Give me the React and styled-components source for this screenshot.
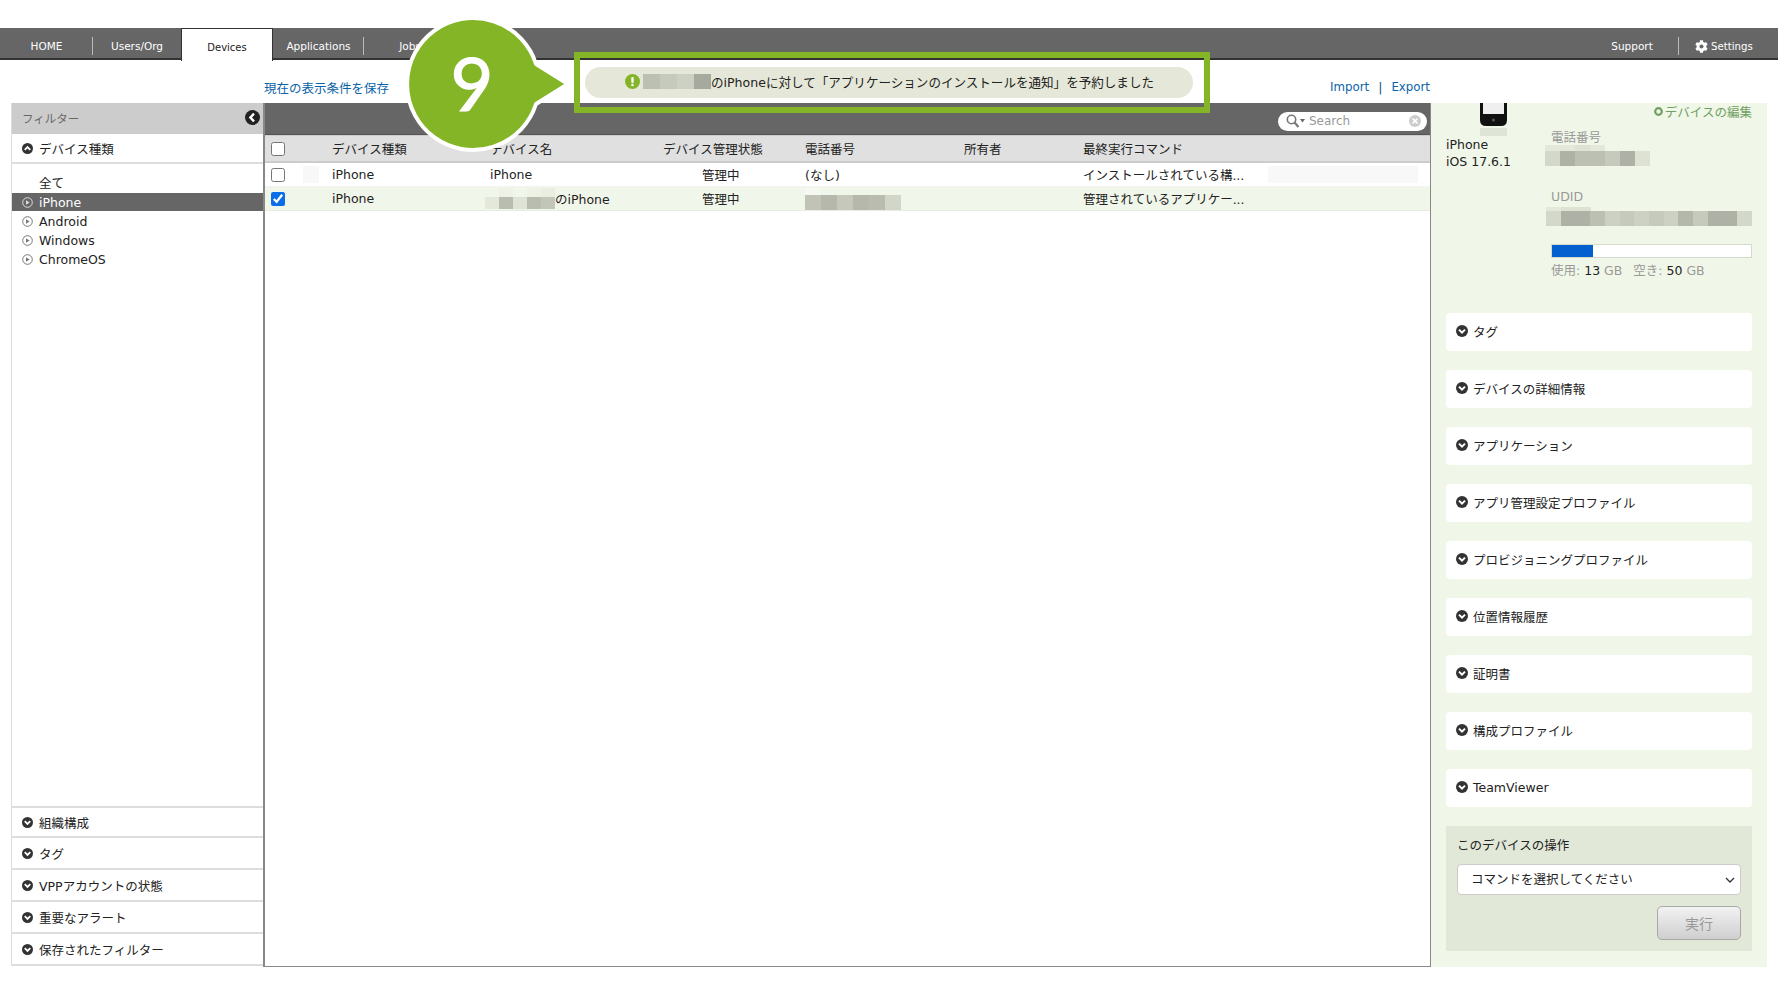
import React from 'react'
import styled, { createGlobalStyle } from 'styled-components'
import { FaCog } from 'react-icons/fa'

const GlobalStyle = createGlobalStyle`
  html, body { margin: 0; padding: 0; background: #fff; }
  body {
    font-family: "DejaVu Sans", "Noto Sans CJK JP", sans-serif;
    font-size: 12.5px;
    color: #222;
  }
`

const FILTER_LIST = ['iPhone', 'Android', 'Windows', 'ChromeOS']
const FILTER_SECTIONS = ['組織構成', 'タグ', 'VPPアカウントの状態', '重要なアラート', '保存されたフィルター']
const DETAIL_CARDS = [
  'タグ',
  'デバイスの詳細情報',
  'アプリケーション',
  'アプリ管理設定プロファイル',
  'プロビジョニングプロファイル',
  '位置情報履歴',
  '証明書',
  '構成プロファイル',
  'TeamViewer',
]

function Chevron({ up, size = 11 }) {
  return (
    <ChevronSvg viewBox="0 0 12 12" width={size} height={size}>
      <circle cx="6" cy="6" r="6" fill="#333" />
      <path d={up ? 'M3 7.4 L6 4.4 L9 7.4' : 'M3 4.6 L6 7.6 L9 4.6'} fill="none" stroke="#fff" strokeWidth="2" />
    </ChevronSvg>
  )
}

function RadioPlay({ light }) {
  const c = light ? '#ddd' : '#777'
  return (
    <ChevronSvg viewBox="0 0 11 11" width={11} height={11}>
      <circle cx="5.5" cy="5.5" r="4.8" fill="none" stroke={c} strokeWidth="1" />
      <path d="M4 3.2 L7.6 5.5 L4 7.8 Z" fill={c} />
    </ChevronSvg>
  )
}

function Mosaic({ rows, margin }) {
  return (
    <MosaicBox $margin={margin}>
      {rows.map((row, i) => (
        <MosaicRow key={i} $h={row.h}>
          {row.cells.map((c, j) => <MosaicCell key={j} $c={c} $w={row.w} />)}
        </MosaicRow>
      ))}
    </MosaicBox>
  )
}

function Callout() {
  return (
    <CalloutSvg width="184" height="156" viewBox="0 0 184 156">
      <path
        d="M136 54 L168 74 L136 94 A66 66 0 1 1 136 54 Z"
        fill="#84b527"
        stroke="#fff"
        strokeWidth="4"
        strokeLinejoin="round"
      />
      <text x="72" y="101" textAnchor="middle" fontFamily="Lato, sans-serif" fontSize="74" fill="#fff" stroke="#fff" strokeWidth="1.2">9</text>
    </CalloutSvg>
  )
}

function PhoneImage() {
  return (
    <svg width="30" height="34" viewBox="0 0 30 34">
      <path d="M1 -6 H28 V17 Q28 23 22 23 H7 Q1 23 1 17 Z" fill="#111" />
      <rect x="4" y="-4" width="21" height="15" fill="#efefef" />
      <circle cx="14.5" cy="17" r="1.6" fill="#555" />
      <rect x="1" y="25" width="27" height="9" fill="#dfe5d6" />
    </svg>
  )
}

export default function App() {
  return (
    <Page>
      <GlobalStyle />
      <Nav>
        <NavItem $w={93} $sep>HOME</NavItem>
        <NavItem $w={88}>Users/Org</NavItem>
        <ActiveTab>Devices</ActiveTab>
        <NavItem $w={91} $sep>Applications</NavItem>
        <NavItem $w={92}>Jobs</NavItem>
        <NavRight>
          <NavItem $w={94} $sep>Support</NavItem>
          <SettingsItem><FaCog size={13} />Settings</SettingsItem>
        </NavRight>
      </Nav>

      <Toolbar>
        <BlueLink>現在の表示条件を保存</BlueLink>
        <ToolLinks>
          <ToolLink>Import</ToolLink>
          <LinkSep>|</LinkSep>
          <ToolLink>Export</ToolLink>
        </ToolLinks>
      </Toolbar>

      <Main>
        <FilterPanel>
          <FilterHead>
            フィルター
            <CollapseBtn viewBox="0 0 15 15" width="15" height="15">
              <circle cx="7.5" cy="7.5" r="7.5" fill="#222" />
              <path d="M9 3.6 L5.4 7.5 L9 11.4" fill="none" stroke="#fff" strokeWidth="2.4" />
            </CollapseBtn>
          </FilterHead>
          <SectionRow $open><Chevron up />デバイス種類</SectionRow>
          <FilterList>
            <AllItem>全て</AllItem>
            {FILTER_LIST.map((name, i) => (
              <FilterItem key={name} $active={i === 0}>
                <RadioPlay light={i === 0} />
                {name}
              </FilterItem>
            ))}
          </FilterList>
          <FilterBottom>
            {FILTER_SECTIONS.map(name => (
              <SectionRow key={name}><Chevron />{name}</SectionRow>
            ))}
          </FilterBottom>
        </FilterPanel>

        <Center>
          <CenterBar>
            <SearchBox>
              <svg width="20" height="14" viewBox="0 0 20 14">
                <circle cx="5.5" cy="5.5" r="4.2" fill="none" stroke="#777" strokeWidth="1.6" />
                <path d="M8.5 8.5 L12.5 13" stroke="#777" strokeWidth="2.2" />
                <path d="M14 5 H19 L16.5 8.5 Z" fill="#666" />
              </svg>
              <SearchText>Search</SearchText>
              <svg width="12" height="12" viewBox="0 0 12 12">
                <circle cx="6" cy="6" r="6" fill="#ccc" />
                <path d="M3.6 3.6 L8.4 8.4 M8.4 3.6 L3.6 8.4" stroke="#fff" strokeWidth="1.5" />
              </svg>
            </SearchBox>
          </CenterBar>
          <HeadRow>
            <Cell><input type="checkbox" readOnly /></Cell>
            <Cell>デバイス種類</Cell>
            <Cell>デバイス名</Cell>
            <Cell>デバイス管理状態</Cell>
            <Cell>電話番号</Cell>
            <Cell>所有者</Cell>
            <Cell>最終実行コマンド</Cell>
          </HeadRow>
          <BodyRow>
            <Cell>
              <input type="checkbox" readOnly />
              <FaintPatch $w={16} $ml={18} />
            </Cell>
            <Cell>iPhone</Cell>
            <Cell>iPhone</Cell>
            <StatusCell>管理中</StatusCell>
            <Cell>(なし)</Cell>
            <Cell />
            <Cell>
              <LastCommand>インストールされている構...</LastCommand>
              <FaintPatch $w={150} $ml={0} />
            </Cell>
          </BodyRow>
          <BodyRow $selected>
            <Cell><input type="checkbox" checked readOnly /></Cell>
            <Cell>iPhone</Cell>
            <Cell>
              <Mosaic
                margin="0 0 0 -5px"
                rows={[
                  { h: 9, w: 14, cells: ['#f1f6ea', '#eef2e6', '#f1f6ea', '#eef2e6', '#e9eee1'] },
                  { h: 12, w: 14, cells: ['#e4e8da', '#b9bdb0', '#dfe3d5', '#b9bdb0', '#c2c6b8'] },
                ]}
              />
              のiPhone
            </Cell>
            <StatusCell>管理中</StatusCell>
            <Cell>
              <Mosaic
                margin="0"
                rows={[
                  { h: 7, w: 15, cells: ['#f6f8f2', '#f1f6ea', '#f1f6ea', '#f1f6ea', '#f1f6ea', '#f1f6ea'] },
                  { h: 15, w: 16, cells: ['#c0c3b6', '#b5b8ab', '#c5c8bb', '#b5b8ab', '#b9bcaf', '#d2d6c8'] },
                ]}
              />
            </Cell>
            <Cell />
            <Cell><LastCommand>管理されているアプリケー...</LastCommand></Cell>
          </BodyRow>
        </Center>

        <Detail>
          <DeviceInfo>
            <DeviceSide>
              <PhoneSlot><PhoneImage /></PhoneSlot>
              <DeviceName>iPhone<br />iOS 17.6.1</DeviceName>
            </DeviceSide>
            <DeviceProps>
              <EditLink>
                <svg width="9" height="9" viewBox="0 0 9 9">
                  <circle cx="4.5" cy="4.5" r="3.3" fill="none" stroke="#6f9f5f" strokeWidth="2.2" />
                </svg>
                デバイスの編集
              </EditLink>
              <PropLabel>電話番号</PropLabel>
              <Mosaic
                margin="-1px 0 0 -6px"
                rows={[
                  { h: 6, w: 15, cells: ['#e3e8da', '#e3e8da', '#dde2d3', '#e3e8da'] },
                  { h: 15, w: 15, cells: ['#d4d8ca', '#aeb1a5', '#bcc0b2', '#bcc0b2', '#c6cabc', '#aeb1a5', '#dde2d3'] },
                ]}
              />
              <UdidLabel>UDID</UdidLabel>
              <Mosaic
                margin="2px 0 0 -5px"
                rows={[
                  { h: 4, w: 15, cells: ['#e3e8da', '#dde2d3', '#dde2d3'] },
                  {
                    h: 15,
                    w: 15,
                    cells: ['#d4d8ca', '#aeb1a5', '#aeb1a5', '#bcc0b2', '#cdd1c3', '#c6cabc', '#cdd1c3', '#c6cabc',
                      '#cdd1c3', '#b4b8ab', '#c6cabc', '#aeb1a5', '#aeb1a5', '#d4d8ca'],
                  },
                ]}
              />
              <StorageBar><StorageFill style={{ width: `${(13 / 63) * 100}%` }} /></StorageBar>
              <StorageText>
                使用: <b>13</b> GB<StorageGap />空き: <b>50</b> GB
              </StorageText>
            </DeviceProps>
          </DeviceInfo>

          {DETAIL_CARDS.map(name => (
            <Card key={name}><Chevron size={12} />{name}</Card>
          ))}

          <OpBox>
            <OpTitle>このデバイスの操作</OpTitle>
            <SelectWrap>
              <CommandSelect defaultValue="">
                <option value="">コマンドを選択してください</option>
              </CommandSelect>
              <SelectArrow width="10" height="6" viewBox="0 0 10 6">
                <path d="M1 1 L5 5 L9 1" fill="none" stroke="#333" strokeWidth="1.3" />
              </SelectArrow>
            </SelectWrap>
            <RunRow><RunButton type="button">実行</RunButton></RunRow>
          </OpBox>
        </Detail>
      </Main>

      <Notice>
        <NoticePill>
          <svg width="15" height="15" viewBox="0 0 15 15">
            <circle cx="7.5" cy="7.5" r="7.5" fill="#84b527" />
            <rect x="6.3" y="3" width="2.4" height="6" rx="1" fill="#fff" />
            <circle cx="7.5" cy="11" r="1.3" fill="#fff" />
          </svg>
          <Mosaic
            margin="0 0 0 3px"
            rows={[
              { h: 15, w: 17, cells: ['#bcc0b2', '#c6cabc', '#cdd1c3', '#a6a99e'] },
            ]}
          />
          <NoticeText>のiPhoneに対して「アプリケーションのインストールを通知」を予約しました</NoticeText>
        </NoticePill>
      </Notice>
      <Callout />
    </Page>
  )
}

const Page = styled.div`
  position: relative;
  width: 1778px;
  height: 1000px;
  padding-top: 28px;
  box-sizing: border-box;
  overflow: hidden;
`
const Nav = styled.nav`
  display: flex;
  align-items: center;
  height: 32px;
  background: #666;
  border-bottom: 2px solid #333;
  box-sizing: border-box;
  color: #fff;
  font-size: 10.5px;
`
const NavItem = styled.div`
  position: relative;
  width: ${p => p.$w}px;
  height: 100%;
  padding-top: 6px;
  box-sizing: border-box;
  display: flex;
  align-items: center;
  justify-content: center;
  &::after {
    content: '';
    display: ${p => (p.$sep ? 'block' : 'none')};
    position: absolute;
    right: 0;
    top: 9px;
    height: 18px;
    width: 1px;
    background: #bbb;
  }
`
const ActiveTab = styled.div`
  width: 92px;
  height: 33px;
  margin-top: 2px;
  padding-top: 5px;
  background: #fff;
  border: 1px solid #333;
  border-bottom: none;
  box-sizing: border-box;
  color: #222;
  font-size: 10px;
  display: flex;
  align-items: center;
  justify-content: center;
`
const NavRight = styled.div`
  margin-left: auto;
  display: flex;
  height: 100%;
`
const SettingsItem = styled.div`
  width: 99px;
  padding: 6px 0 0 16px;
  box-sizing: border-box;
  display: flex;
  align-items: center;
  gap: 3px;
  font-size: 10.2px;
`
const Toolbar = styled.div`
  height: 43px;
  display: flex;
  align-items: center;
  justify-content: space-between;
  padding: 11px 348px 0 264px;
  box-sizing: border-box;
`
const BlueLink = styled.a`
  color: #0b63a8;
  font-size: 12.5px;
`
const ToolLink = styled(BlueLink)`
  font-size: 11.8px;
`
const ToolLinks = styled.div`
  display: flex;
  gap: 9px;
  margin-top: 1px;
`
const LinkSep = styled.span`
  color: #0b4f88;
`
const Main = styled.div`
  display: grid;
  grid-template-columns: 252px 1168px 336px;
  margin-left: 11px;
  height: 864px;
`
const FilterPanel = styled.aside`
  display: flex;
  flex-direction: column;
  border-left: 1px solid #ddd;
  box-sizing: border-box;
  height: 863px;
`
const FilterHead = styled.div`
  height: 31px;
  padding: 0 3px 2px 10px;
  flex: none;
  background: #ccc;
  color: #666;
  display: flex;
  align-items: center;
  justify-content: space-between;
  box-sizing: border-box;
  font-size: 11.5px;
`
const CollapseBtn = styled.svg`
  display: block;
`
const ChevronSvg = styled.svg`
  display: block;
  flex: none;
`
const SectionRow = styled.div`
  height: ${p => (p.$open ? 30 : 32)}px;
  flex: none;
  box-sizing: border-box;
  display: flex;
  align-items: center;
  gap: 6px;
  padding-left: 10px;
  border-top: ${p => (p.$open ? 'none' : '2px solid #ddd')};
  border-bottom: ${p => (p.$open ? '2px solid #ddd' : 'none')};
`
const FilterList = styled.div`
  padding-top: 9px;
`
const FilterItem = styled.div`
  height: ${p => (p.$active ? 18 : 19)}px;
  margin-bottom: ${p => (p.$active ? 1 : 0)}px;
  display: flex;
  align-items: center;
  gap: 6px;
  padding-left: 10px;
  background: ${p => (p.$active ? '#666' : 'transparent')};
  color: ${p => (p.$active ? '#fff' : '#222')};
`
const AllItem = styled(FilterItem)`
  padding-left: 27px;
  margin-bottom: 1px;
`
const FilterBottom = styled.div`
  margin-top: auto;
  border-bottom: 2px solid #ddd;
  & > div:first-child {
    height: 30px;
  }
`
const Center = styled.main`
  border-left: 2px solid #888;
  border-right: 1px solid #888;
  border-bottom: 1px solid #888;
  box-sizing: border-box;
  height: 864px;
`
const CenterBar = styled.div`
  height: 32px;
  background: #666;
  border-bottom: 1px solid #555;
  box-sizing: border-box;
  display: flex;
  align-items: center;
  justify-content: flex-end;
  padding: 5px 3px 0 0;
`
const SearchBox = styled.div`
  width: 149px;
  height: 19px;
  background: #fff;
  border-radius: 10px;
  box-sizing: border-box;
  display: flex;
  align-items: center;
  padding: 0 6px 0 8px;
`
const SearchText = styled.span`
  flex: 1;
  color: #999;
  font-size: 12px;
  margin-left: 3px;
`
const columns = '67px 158px 173px 142px 159px 119px 1fr'
const HeadRow = styled.div`
  display: grid;
  grid-template-columns: ${columns};
  height: 28px;
  background: #e0e0e0;
  border-top: 1px solid #ccc;
  border-bottom: 2px solid #ccc;
  box-sizing: border-box;
  align-items: center;
`
const BodyRow = styled.div`
  display: grid;
  grid-template-columns: ${columns};
  height: 24px;
  align-items: center;
  background: ${p => (p.$selected ? '#f1f6ea' : '#fff')};
  border-bottom: 1px solid ${p => (p.$selected ? '#e8ecdf' : '#f2f2f2')};
  box-sizing: border-box;
`
const Cell = styled.div`
  display: flex;
  align-items: center;
  white-space: nowrap;
  min-width: 0;
  input {
    width: 14px;
    height: 14px;
    margin: 0 0 0 6px;
    accent-color: #0a6ee6;
  }
`
const StatusCell = styled(Cell)`
  padding-left: 39px;
`
const LastCommand = styled.span`
  width: 185px;
  flex: none;
`
const FaintPatch = styled.span`
  display: block;
  width: ${p => p.$w}px;
  height: 17px;
  margin-left: ${p => p.$ml}px;
  background: #f8f8f8;
`
const MosaicBox = styled.div`
  display: flex;
  flex-direction: column;
  flex: none;
  margin: ${p => p.$margin};
`
const MosaicRow = styled.div`
  display: flex;
  height: ${p => p.$h}px;
`
const MosaicCell = styled.span`
  display: block;
  width: ${p => p.$w}px;
  background: ${p => p.$c};
`
const Detail = styled.section`
  background: #f1f7e8;
  padding: 0 15px;
  height: 864px;
  box-sizing: border-box;
  overflow: hidden;
`
const DeviceInfo = styled.div`
  display: flex;
  height: 210px;
`
const DeviceSide = styled.div`
  width: 105px;
  flex: none;
`
const PhoneSlot = styled.div`
  height: 33px;
  padding-left: 33px;
  overflow: hidden;
`
const DeviceName = styled.div`
  line-height: 17px;
`
const DeviceProps = styled.div`
  flex: 1;
  min-width: 0;
`
const EditLink = styled.div`
  height: 16px;
  display: flex;
  align-items: center;
  justify-content: flex-end;
  gap: 2px;
  color: #6f9f5f;
`
const PropLabel = styled.div`
  margin-top: 10px;
  height: 17px;
  line-height: 17px;
  color: #999;
`
const UdidLabel = styled(PropLabel)`
  margin-top: 22px;
`
const StorageBar = styled.div`
  width: 201px;
  height: 14px;
  margin-top: 18px;
  border: 1px solid #d5dacb;
  background: #fff;
  box-sizing: border-box;
`
const StorageFill = styled.div`
  height: 100%;
  background: #0460cf;
`
const StorageText = styled.div`
  margin-top: 2px;
  color: #999;
  white-space: nowrap;
  b {
    color: #222;
    font-weight: normal;
  }
`
const StorageGap = styled.span`
  display: inline-block;
  width: 11px;
`
const Card = styled.div`
  height: 38px;
  margin-bottom: 19px;
  padding: 0 0 2px 10px;
  background: #fff;
  border-radius: 4px;
  box-sizing: border-box;
  display: flex;
  align-items: center;
  gap: 5px;
`
const OpBox = styled.div`
  background: #e1e8d8;
  padding: 10px 11px 11px;
  height: 125px;
  box-sizing: border-box;
`
const OpTitle = styled.div`
  height: 20px;
  line-height: 20px;
`
const SelectWrap = styled.div`
  position: relative;
  margin-top: 8px;
`
const CommandSelect = styled.select`
  display: block;
  appearance: none;
  width: 100%;
  height: 31px;
  padding-left: 13px;
  background-color: #fff;
  border: 1px solid #ccc;
  border-radius: 4px;
  color: #222;
  font: inherit;
`
const SelectArrow = styled.svg`
  position: absolute;
  right: 6px;
  top: 13px;
`
const RunRow = styled.div`
  display: flex;
  justify-content: flex-end;
  margin-top: 11px;
`
const RunButton = styled.button`
  width: 84px;
  height: 34px;
  border: 1px solid #a8a8a8;
  border-radius: 5px;
  background: linear-gradient(#f2f2f2, #cfcfcf);
  color: #999;
  font: inherit;
  font-size: 14px;
`
const Notice = styled.div`
  position: absolute;
  left: 574px;
  top: 52px;
  width: 636px;
  height: 61px;
  border: 6px solid #84b527;
  box-sizing: border-box;
`
const NoticePill = styled.div`
  position: absolute;
  left: 5px;
  top: 9px;
  width: 608px;
  height: 31px;
  padding: 0 0 2px 40px;
  background: #e5e8d8;
  border-radius: 16px;
  display: flex;
  align-items: center;
  box-sizing: border-box;
`
const NoticeText = styled.span`
  font-size: 12.55px;
  white-space: nowrap;
`
const CalloutSvg = styled.svg`
  position: absolute;
  left: 400px;
  top: 10px;
`
